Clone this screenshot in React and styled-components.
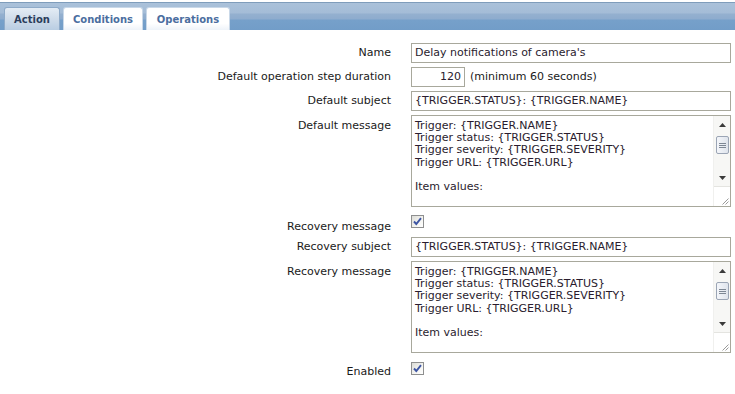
import React from 'react';
import styled, { createGlobalStyle } from 'styled-components';

const GlobalStyle = createGlobalStyle`
  html, body {
    margin: 0;
    padding: 0;
    background: #ffffff;
  }
  body {
    font-family: "DejaVu Sans", Verdana, sans-serif;
    font-size: 11px;
    color: #1a1a1a;
  }
`

const Page = styled.div`
  width: 735px;
  height: 394px;
  overflow: hidden;
`

const TabBar = styled.div`
  height: 28px;
  margin-top: 2px;
  border-top: 1px solid #7f9dbb;
  background: linear-gradient(to bottom, #aac1da 0px, #a4bcd7 10px, #94b0cf 11px, #8eacce 16px, #76a0ca 17px, #729dc8 100%);
  display: flex;
  align-items: flex-end;
  gap: 3px;
  padding-left: 4px;
  box-sizing: border-box;
`

const Tab = styled.div`
  height: 23px;
  width: ${p => p.$width}px;
  display: flex;
  align-items: center;
  justify-content: center;
  box-sizing: border-box;
  font-weight: bold;
  font-size: 10px;
  border-radius: 3px 3px 0 0;
  color: ${p => (p.$active ? '#2a3d5c' : '#4b6e9f')};
  background: ${p => (p.$active
    ? 'linear-gradient(to bottom, #e4ecf5 0%, #cfdcea 50%, #b9cde2 100%)'
    : 'linear-gradient(to bottom, #ffffff 0%, #ffffff 70%, #eef3f9 100%)')};
  border: 1px solid ${p => (p.$active ? '#8fabc9' : '#c9d8e8')};
  border-bottom: none;
`

const Form = styled.div`
  display: grid;
  grid-template-columns: 391px 320px;
  column-gap: 20px;
  row-gap: 4px;
  padding-top: 13px;
`

const Label = styled.div`
  text-align: right;
  line-height: 12px;
  padding-top: ${p => p.$top ?? 4}px;
  white-space: nowrap;
`

const Field = styled.div`
  display: flex;
  align-items: flex-start;
  gap: 5px;
  line-height: 12px;
`

const Input = styled.div`
  height: 20px;
  width: ${p => p.$width || 320}px;
  box-sizing: border-box;
  border: 1px solid #a8a89c;
  background: #ffffff;
  padding: 0 3px;
  display: flex;
  align-items: center;
  justify-content: ${p => (p.$right ? 'flex-end' : 'flex-start')};
  color: #2a1c2e;
  white-space: nowrap;
  overflow: hidden;
`

const Hint = styled.span`
  padding-top: 4px;
`

const TextArea = styled.div`
  height: 92px;
  width: 320px;
  box-sizing: border-box;
  border: 1px solid #a8a89c;
  background: #ffffff;
  display: flex;
  overflow: hidden;
`

const TextBody = styled.div`
  flex: 1;
  height: 90px;
  box-sizing: border-box;
  padding: 4px 3px 0 3px;
  line-height: 12.2px;
  white-space: pre;
  overflow: hidden;
  color: #2a1c2e;
`

const ScrollCol = styled.div`
  width: 16px;
  display: flex;
  flex-direction: column;
  background: #f7f7f5;
  border-left: 1px solid #f0f0ee;
`

const Arrow = styled.div`
  height: 17px;
  display: flex;
  align-items: center;
  justify-content: center;
`

const Track = styled.div`
  flex: 1;
  padding-top: 3px;
  display: flex;
  justify-content: center;
`

const Thumb = styled.div`
  width: 13px;
  height: 18px;
  box-sizing: border-box;
  border: 1px solid #9ba5b5;
  border-radius: 2px;
  background: linear-gradient(to right, #f4f6fa, #dfe4ec);
  display: flex;
  flex-direction: column;
  align-items: center;
  justify-content: center;
  gap: 1px;
`

const Grip = styled.span`
  display: block;
  width: 7px;
  height: 1px;
  background: #7d8794;
`

const Resizer = styled.div`
  height: 18px;
  border-top: 1px solid #e4e4e0;
  background: #ffffff;
  display: flex;
  align-items: flex-end;
  justify-content: flex-end;
  padding: 0 1px 1px 0;
`

const Check = styled.div`
  width: 13px;
  height: 13px;
  box-sizing: border-box;
  margin-top: ${p => p.$top ?? 4}px;
  border: 1px solid #8e8f8f;
  background: linear-gradient(135deg, #dcdcd7 0%, #f5f5f2 60%, #ffffff 100%);
  display: flex;
  align-items: center;
  justify-content: center;
`

const CheckMark = () => (
  <svg width="9" height="9" viewBox="0 0 9 9">
    <path d="M1 4.5 L3.3 7 L8 1.2" fill="none" stroke="#3d55a3" strokeWidth="1.9" />
  </svg>
)

const UpArrow = () => (
  <svg width="7" height="4" viewBox="0 0 7 4"><path d="M3.5 0 L7 4 L0 4 Z" fill="#3a3a3a" /></svg>
)

const DownArrow = () => (
  <svg width="7" height="4" viewBox="0 0 7 4"><path d="M0 0 L7 0 L3.5 4 Z" fill="#3a3a3a" /></svg>
)

const ResizeGrip = () => (
  <svg width="8" height="8" viewBox="0 0 8 8">
    <path d="M7.5 1.5 L1.5 7.5 M7.5 4.5 L4.5 7.5" stroke="#9a9a9a" strokeWidth="1" />
  </svg>
)

const message = `Trigger: {TRIGGER.NAME}
Trigger status: {TRIGGER.STATUS}
Trigger severity: {TRIGGER.SEVERITY}
Trigger URL: {TRIGGER.URL}

Item values:

{ITEM.NAME1} ({HOST.NAME1}:{ITEM.KEY1}): {ITEM.VALUE1}`

const MessageBox = ({ text }) => (
  <TextArea>
    <TextBody>{text}</TextBody>
    <ScrollCol>
      <Arrow><UpArrow /></Arrow>
      <Track>
        <Thumb><Grip /><Grip /><Grip /></Thumb>
      </Track>
      <Arrow><DownArrow /></Arrow>
      <Resizer><ResizeGrip /></Resizer>
    </ScrollCol>
  </TextArea>
)

const tabs = [
  { name: 'Action', width: 56, active: true },
  { name: 'Conditions', width: 80 },
  { name: 'Operations', width: 84 },
]

export default function App() {
  return (
    <Page>
      <GlobalStyle />
      <TabBar>
        {tabs.map(t => (
          <Tab key={t.name} $active={t.active} $width={t.width}>{t.name}</Tab>
        ))}
      </TabBar>
      <Form>
        <Label>Name</Label>
        <Field><Input>Delay notifications of camera's</Input></Field>

        <Label>Default operation step duration</Label>
        <Field>
          <Input $width={54} $right>120</Input>
          <Hint>(minimum 60 seconds)</Hint>
        </Field>

        <Label>Default subject</Label>
        <Field><Input>{'{TRIGGER.STATUS}: {TRIGGER.NAME}'}</Input></Field>

        <Label $top={5}>Default message</Label>
        <Field><MessageBox text={message} /></Field>

        <Label $top={10}>Recovery message</Label>
        <Field><Check><CheckMark /></Check></Field>

        <Label>Recovery subject</Label>
        <Field><Input>{'{TRIGGER.STATUS}: {TRIGGER.NAME}'}</Input></Field>

        <Label $top={5}>Recovery message</Label>
        <Field><MessageBox text={message} /></Field>

        <Label $top={9}>Enabled</Label>
        <Field><Check $top={5}><CheckMark /></Check></Field>
      </Form>
    </Page>
  );
}
